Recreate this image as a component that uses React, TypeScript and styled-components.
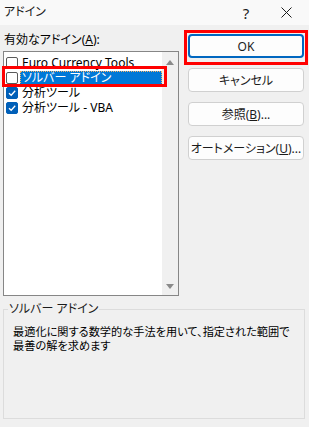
import React from "react";
import styled, { createGlobalStyle } from "styled-components";

const Global = createGlobalStyle`
  html, body { margin: 0; padding: 0; background: #f0f0f0; }
  body {
    font-family: "Noto Sans", "Noto Sans CJK JP", sans-serif;
    font-size: 12px;
    color: #000;
    font-feature-settings: "palt";
  }
`;

const Window = styled.div`
  width: 309px;
  height: 427px;
  background: #f0f0f0;
  display: flex;
  flex-direction: column;
  overflow: hidden;
`;

const TitleBar = styled.div`
  height: 25px;
  flex: none;
  background: #f9f9f9;
  display: flex;
  align-items: center;
  padding-left: 4px;
  color: #1b1b1b;
`;

const Title = styled.div`
  flex: 1;
  line-height: 14px;
  margin-top: -2px;
`;

const TitleButton = styled.div<{ $w: number }>`
  width: ${(p) => p.$w}px;
  height: 25px;
  display: flex;
  align-items: center;
  justify-content: center;
  font-size: 15px;
  color: #1b1b1b;
`;

const Body = styled.div`
  flex: 1;
  display: flex;
  flex-direction: column;
  padding: 8px 4px 8px 3px;
`;

const Top = styled.div`
  display: flex;
  gap: 9px;
`;

const LeftCol = styled.div`
  display: flex;
  flex-direction: column;
  gap: 4px;
`;

const Label = styled.div`
  line-height: 14px;
  padding-left: 1px;
`;

const ListBox = styled.div`
  position: relative;
  width: 176px;
  height: 245px;
  box-sizing: border-box;
  border: 1px solid #868686;
  background: #fff;
  display: flex;
`;

const Items = styled.div`
  flex: 1;
  padding-top: 3px;
  display: flex;
  flex-direction: column;
`;

const Row = styled.div`
  height: 15px;
  display: flex;
  align-items: center;
  padding-left: 2px;
`;

const Box = styled.div<{ $checked: boolean }>`
  width: 12px;
  height: 12px;
  box-sizing: border-box;
  border-radius: 2px;
  flex: none;
  border: 1px solid ${(p) => (p.$checked ? "#005fb8" : "#5a5a5a")};
  background: ${(p) => (p.$checked ? "#005fb8" : "#fff")};
  display: flex;
  align-items: center;
  justify-content: center;
`;

const ItemText = styled.div<{ $selected: boolean }>`
  flex: 1;
  margin-left: 2px;
  height: 14px;
  line-height: 14px;
  padding-left: 2px;
  white-space: nowrap;
  background: ${(p) => (p.$selected ? "#0078d7" : "transparent")};
  color: ${(p) => (p.$selected ? "#fff" : "#000")};
  outline: ${(p) => (p.$selected ? "1px dotted #f7b267" : "none")};
  outline-offset: -1px;
`;

const ScrollBar = styled.div`
  width: 16px;
  flex: none;
  background: #f0f0f0;
  display: flex;
  flex-direction: column;
  justify-content: space-between;
  align-items: center;
  padding: 8px 0 6px;
  box-sizing: border-box;
`;

const Highlight = styled.div`
  position: absolute;
  border: 3px solid #ff0000;
  pointer-events: none;
`;

const RightCol = styled.div`
  display: flex;
  flex-direction: column;
  gap: 10px;
  padding-top: 1px;
`;

const Button = styled.div<{ $default?: boolean }>`
  position: relative;
  width: 116px;
  height: 24px;
  box-sizing: border-box;
  border-radius: 4px;
  background: #fdfdfd;
  border: ${(p) => (p.$default ? "2px solid #0067c0" : "1px solid #d0d0d0")};
  display: flex;
  align-items: center;
  justify-content: center;
  color: #1b1b1b;
  white-space: nowrap;
`;

const Group = styled.fieldset`
  flex: 1;
  margin: 6px 0 0 0;
  padding: 0 4px 0 4px;
  border: 1px solid #dcdcdc;
  min-width: 0;
`;

const Legend = styled.legend`
  padding: 0 1px;
  line-height: 14px;
  color: #1b1b1b;
`;

const Description = styled.div`
  margin-top: 9px;
  padding-left: 5px;
  line-height: 14px;
  font-size: 11.2px;
  white-space: nowrap;
`;

const Arrow = ({ up }: { up: boolean }) => (
  <svg width="8" height="5" viewBox="0 0 8 5">
    <polygon points={up ? "0,5 8,5 4,0" : "0,0 8,0 4,5"} fill="#8a8a8a" />
  </svg>
);

const Check = () => (
  <svg width="10" height="10" viewBox="0 0 10 10">
    <path d="M2 5.2 L4.2 7.3 L8.2 2.8" fill="none" stroke="#fff" strokeWidth="1.3" />
  </svg>
);

const items = [
  { name: "Euro Currency Tools", checked: false, selected: false },
  { name: "ソルバー アドイン", checked: false, selected: true },
  { name: "分析ツール", checked: true, selected: false },
  { name: "分析ツール - VBA", checked: true, selected: false },
];

export default function App() {
  return (
    <Window>
      <Global />
      <TitleBar>
        <Title>アドイン</Title>
        <TitleButton $w={34}>?</TitleButton>
        <TitleButton $w={46}>
          <svg width="11" height="11" viewBox="0 0 11 11">
            <path d="M0.5 0.5 L10.5 10.5 M10.5 0.5 L0.5 10.5" stroke="#1b1b1b" strokeWidth="1" />
          </svg>
        </TitleButton>
      </TitleBar>
      <Body>
        <Top>
          <LeftCol>
            <Label>
              有効なアドイン(<u>A</u>):
            </Label>
            <ListBox>
              <Items>
                {items.map((it) => (
                  <Row key={it.name}>
                    <Box $checked={it.checked}>{it.checked && <Check />}</Box>
                    <ItemText $selected={it.selected}>{it.name}</ItemText>
                  </Row>
                ))}
              </Items>
              <ScrollBar>
                <Arrow up />
                <Arrow up={false} />
              </ScrollBar>
              <Highlight style={{ left: -2, top: 14, width: 159, height: 15 }} />
            </ListBox>
          </LeftCol>
          <RightCol>
            <Button $default>
              OK
              <Highlight style={{ left: -6, top: -6, width: 118, height: 29 }} />
            </Button>
            <Button>キャンセル</Button>
            <Button>
              参照(<u>B</u>)...
            </Button>
            <Button>
              オートメーション(<u>U</u>)...
            </Button>
          </RightCol>
        </Top>
        <Group>
          <Legend>ソルバー アドイン</Legend>
          <Description>
            最適化に関する数学的な手法を用いて、指定された範囲で
            <br />
            最善の解を求めます
          </Description>
        </Group>
      </Body>
    </Window>
  );
}
